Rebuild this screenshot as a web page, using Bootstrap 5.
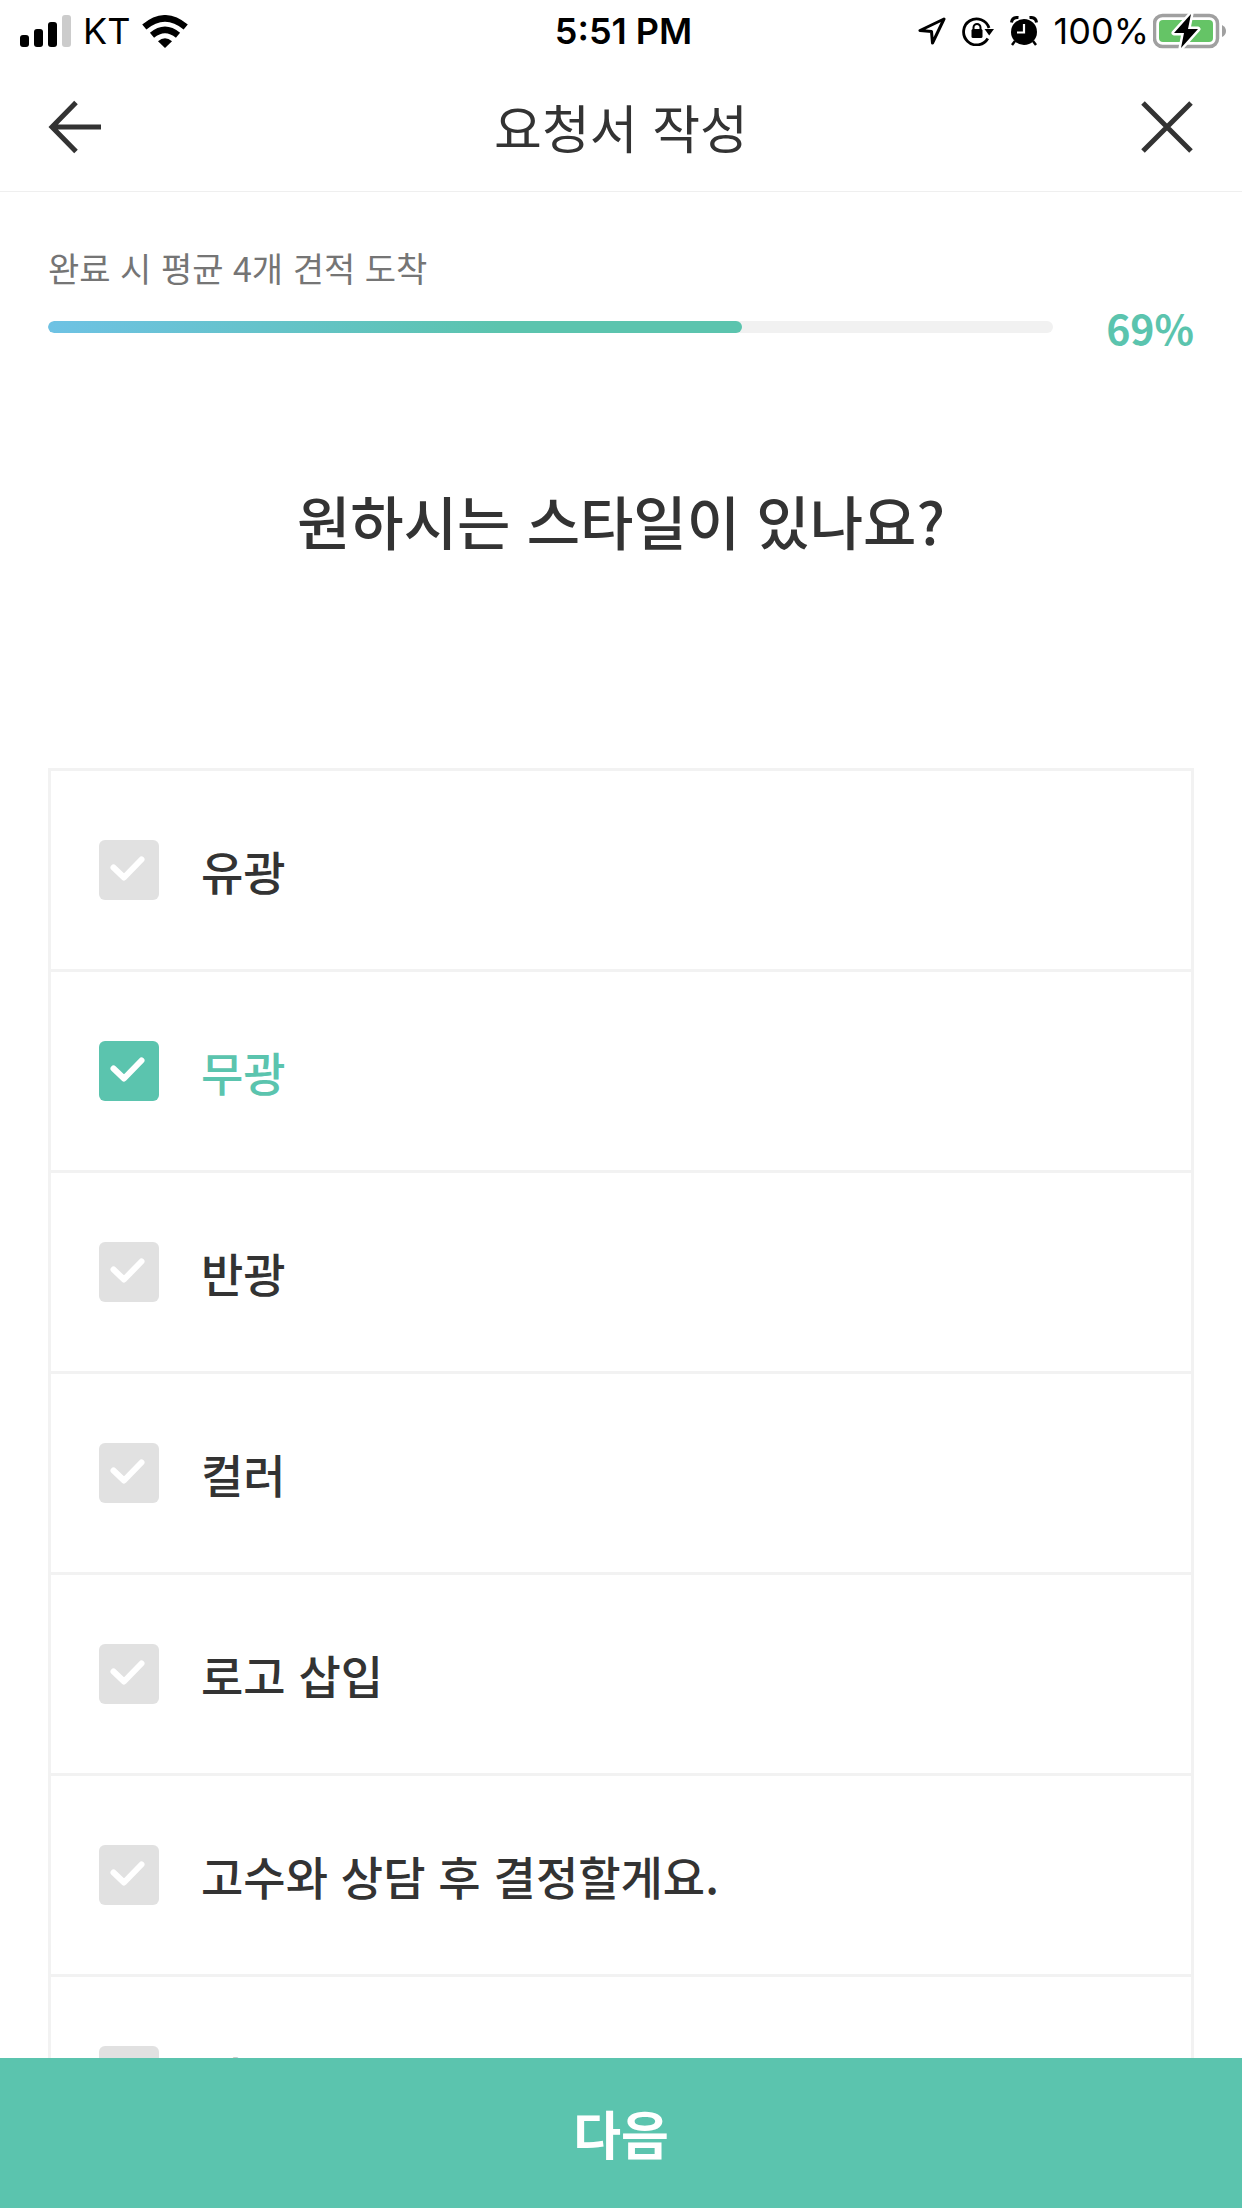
<!DOCTYPE html>
<html lang="ko">
<head>
<meta charset="utf-8">
<meta name="viewport" content="width=device-width, initial-scale=1">
<title>요청서 작성</title>
<link href="https://cdn.jsdelivr.net/npm/bootstrap@5.3.0/dist/css/bootstrap.min.css" rel="stylesheet">
<style>
:root { --mint: #5bc4ae; --ink: #333333; --line: #f2f2f2; --gutter: 48px; }
body { font-family: "Noto Sans CJK KR", "Noto Sans", sans-serif; color: var(--ink); background: #fff; }
svg { display: block; flex: none; }
.status-bar { height: 62px; padding: 0 15px; font-family: Inter, "Liberation Sans", sans-serif; font-size: 36px; line-height: 60px; color: #000; }
.status-side { flex: 1 1 0; }
.status-left { gap: 12px; padding-left: 5px; }
.app-header { height: 130px; padding: 0 var(--gutter); border-bottom: 1px solid #efefef; }
.app-title { font-size: 52px; line-height: 72px; font-weight: 400; }
.icon-btn { line-height: 0; }
.app-main { overflow-y: auto; scrollbar-width: none; padding: 0 var(--gutter); }
.app-main::-webkit-scrollbar { display: none; }
.progress-area { padding-top: 50px; }
.progress-note { font-size: 34px; line-height: 52px; color: #757575; }
.estimate-progress { height: 12px; border-radius: 6px; background: #f1f1f1; }
.estimate-progress .progress-bar { border-radius: 6px; background: linear-gradient(90deg, #6ec2e4, var(--mint) 65%); }
.progress-row { gap: 53px; height: 66px; }
.progress-value { font-size: 41px; line-height: 56px; font-weight: 700; color: var(--mint); }
.question { font-size: 58px; line-height: 88px; font-weight: 500; padding: 116px 0 204px; }
.option-list { border: 3px solid var(--line); }
.option-item { height: 201px; padding: 0 48px; gap: 42px; border-bottom: 3px solid var(--line); font-size: 46px; line-height: 68px; font-weight: 500; cursor: pointer; }
.option-item:last-child { height: 198px; border-bottom: 0; }
.option-item .form-check-input { width: 60px; height: 60px; margin: 0; border: 0; border-radius: 6px; background-color: #e1e1e1; background-size: 60px 60px;
  background-image: url("data:image/svg+xml,%3Csvg xmlns='http://www.w3.org/2000/svg' viewBox='0 0 60 60'%3E%3Cpath d='M14.5 27.5L25 37.5L42.5 19.5' fill='none' stroke='%23fff' stroke-width='6' stroke-linecap='round' stroke-linejoin='round'/%3E%3C/svg%3E"); }
.option-item .form-check-input:checked { background-color: var(--mint); }
.option-item:has(:checked) { color: var(--mint); }
.next-btn { height: 150px; background: var(--mint); color: #fff; font-size: 52px; line-height: 72px; font-weight: 700; }
.next-btn:hover, .next-btn:active { background: #4fb49f; color: #fff; }
</style>
</head>
<body>
<div class="vh-100 d-flex flex-column overflow-hidden">
  <div class="status-bar d-flex align-items-center flex-shrink-0">
    <div class="status-side status-left d-flex align-items-center">
      <svg width="51" height="32" viewBox="0 0 51 32" role="img" aria-label="신호 세기">
        <rect x="0" y="20" width="9" height="12" rx="3"/><rect x="14" y="14" width="9" height="18" rx="3"/><rect x="28" y="7" width="9" height="25" rx="3"/><rect x="42" y="0" width="9" height="32" rx="3" fill="#ccc"/>
      </svg>
      <span>KT</span>
      <svg width="46" height="33" viewBox="0 0 46 33" role="img" aria-label="Wi-Fi">
        <path d="M23 33L16 26.300Q23 20 30 26.300Z"/>
        <path d="M10 20.300Q23 9.500 36 20.300" fill="none" stroke="#000" stroke-width="6.500"/>
        <path d="M2.300 12Q23 -5.300 43.700 12" fill="none" stroke="#000" stroke-width="6.500"/>
      </svg>
    </div>
    <div class="fw-semibold">5:51 PM</div>
    <div class="status-side d-flex align-items-center justify-content-end">
      <svg width="28" height="28" viewBox="0 0 28 28" class="me-3" role="img" aria-label="위치">
        <path d="M26 2L2 13.500L13.500 14.500L14.500 26Z" fill="none" stroke="#000" stroke-width="3" stroke-linejoin="round"/>
      </svg>
      <svg width="32" height="30" viewBox="0 0 32 30" class="me-3" role="img" aria-label="화면 회전 잠금">
        <path d="M25.800 22.500A13 13 0 1 1 27 12" fill="none" stroke="#000" stroke-width="2.800"/>
        <path d="M22.500 13H32L27.200 19.500Z"/>
        <rect x="9.500" y="13" width="11" height="9" rx="1.500"/>
        <path d="M11.500 14V11.500A3.500 3.500 0 0 1 18.500 11.500V14" fill="none" stroke="#000" stroke-width="2"/>
      </svg>
      <svg width="28" height="30" viewBox="0 0 28 30" class="me-3" role="img" aria-label="알람">
        <circle cx="14" cy="16" r="13"/>
        <path d="M1.500 6.500Q2 1 8.500 1.500M26.500 6.500Q26 1 19.500 1.500" fill="none" stroke="#000" stroke-width="3"/>
        <path d="M5 25L2 29M23 25L26 29" stroke="#000" stroke-width="2.500"/>
        <path d="M14 8V16.500H7" fill="none" stroke="#fff" stroke-width="2.200"/>
      </svg>
      <span class="me-1">100%</span>
      <svg width="74" height="36" viewBox="0 0 74 36" role="img" aria-label="충전 중">
        <rect x="1.500" y="2.500" width="63" height="31" rx="8" fill="none" stroke="#a0a0a0" stroke-width="3.500"/>
        <rect x="6" y="7" width="54" height="22" rx="4" fill="#65c466"/>
        <path d="M69 12Q73 14 73 18Q73 22 69 24Z" fill="#a0a0a0"/>
        <path d="M38 1L21 20H31L28 35L45 16H35Z" stroke="#fff" stroke-width="5" stroke-linejoin="round" paint-order="stroke"/>
      </svg>
    </div>
  </div>

  <header class="app-header d-flex align-items-center justify-content-between flex-shrink-0">
    <button type="button" class="btn p-0 border-0 icon-btn" aria-label="뒤로">
      <svg width="54" height="54" viewBox="0 0 54 54" fill="none" stroke="#333" stroke-width="5"><path d="M28 2.500L4 27L28 51.500M4 27H53"/></svg>
    </button>
    <h1 class="app-title mb-0">요청서 작성</h1>
    <button type="button" class="btn p-0 border-0 icon-btn" aria-label="닫기">
      <svg width="54" height="54" viewBox="0 0 54 54" fill="none" stroke="#333" stroke-width="5"><path d="M3 3L51 51M51 3L3 51"/></svg>
    </button>
  </header>

  <main class="app-main flex-grow-1">
    <section class="progress-area">
      <div class="progress-note">완료 시 평균 4개 견적 도착</div>
      <div class="progress-row d-flex align-items-center">
        <div class="progress estimate-progress flex-grow-1" role="progressbar" aria-label="작성 진행률" aria-valuenow="69" aria-valuemin="0" aria-valuemax="100">
          <div class="progress-bar" style="width: 69%"></div>
        </div>
        <div class="progress-value">69%</div>
      </div>
    </section>
    <h2 class="question text-center mb-0">원하시는 스타일이 있나요?</h2>
    <div class="option-list">
      <label class="option-item d-flex align-items-center" for="style1"><input class="form-check-input flex-shrink-0" type="checkbox" id="style1"><span>유광</span></label>
      <label class="option-item d-flex align-items-center" for="style2"><input class="form-check-input flex-shrink-0" type="checkbox" id="style2" checked><span>무광</span></label>
      <label class="option-item d-flex align-items-center" for="style3"><input class="form-check-input flex-shrink-0" type="checkbox" id="style3"><span>반광</span></label>
      <label class="option-item d-flex align-items-center" for="style4"><input class="form-check-input flex-shrink-0" type="checkbox" id="style4"><span>컬러</span></label>
      <label class="option-item d-flex align-items-center" for="style5"><input class="form-check-input flex-shrink-0" type="checkbox" id="style5"><span>로고 삽입</span></label>
      <label class="option-item d-flex align-items-center" for="style6"><input class="form-check-input flex-shrink-0" type="checkbox" id="style6"><span>고수와 상담 후 결정할게요.</span></label>
      <label class="option-item d-flex align-items-center" for="style7"><input class="form-check-input flex-shrink-0" type="checkbox" id="style7"><span>기타</span></label>
    </div>
  </main>

  <button type="button" class="btn next-btn w-100 rounded-0 border-0 flex-shrink-0">다음</button>
</div>
<script src="https://cdn.jsdelivr.net/npm/bootstrap@5.3.0/dist/js/bootstrap.bundle.min.js"></script>
</body>
</html>
